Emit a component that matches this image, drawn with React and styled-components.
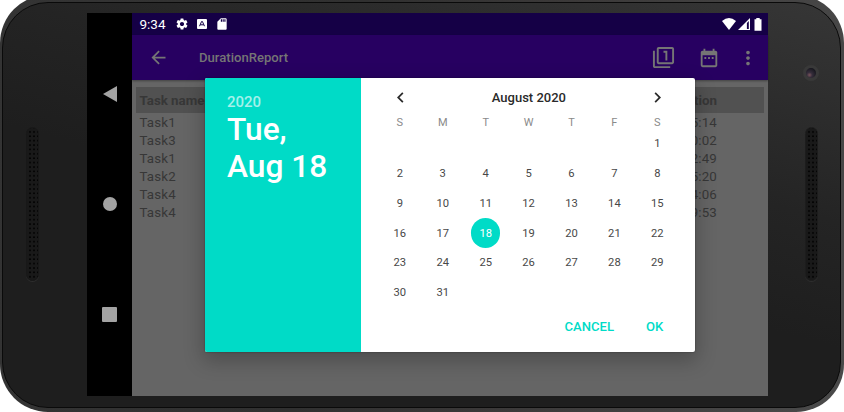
import React from "react";
import styled, { createGlobalStyle } from "styled-components";
import { MdArrowBack, MdFilter1, MdDateRange, MdMoreVert, MdSettings, MdSdCard, MdChevronLeft, MdChevronRight } from "react-icons/md";

const Global = createGlobalStyle`
  * { box-sizing: border-box; }
  body { margin: 0; background: #fff; overflow: hidden; font-family: Roboto, "Liberation Sans", sans-serif; }
`;

const Viewport = styled.div`
  width: 844px;
  height: 412px;
  overflow: hidden;
`;

const Phone = styled.div`
  width: 844px;
  height: 417px;
  margin-top: -5px;
  padding: 7px 3px 4px 2px;
  border-radius: 48px;
  background: linear-gradient(100deg, #343434 0%, #303030 40%, #3a3838 60%, #4a4a4a 100%);
  display: flex;
`;

const Body = styled.div`
  flex: 1;
  display: grid;
  grid-template-columns: 84px 681px 1fr;
  border: 1px solid #0a0a0a;
  border-radius: 46px;
  background: linear-gradient(15deg, #1e1e1e 0%, #1e1e1e 45%, #242424 65%, #363636 100%);
`;

const Bezel = styled.div`
  display: flex;
  flex-direction: column;
  align-items: center;
  padding: ${(p) => (p.$right ? "62px 0 0 14px" : "124px 26px 0 0")};
  gap: 46px;
`;

const Speaker = styled.div`
  width: 13px;
  height: 154px;
  border-radius: 7px;
  border: 1px solid ${(p) => (p.$light ? "#1d1d1d" : "#181818")};
  background: radial-gradient(circle at 2px 2px, #040404 0.7px, #191919 1.2px) 1px 2px / 4px 4.4px;
  box-shadow: 0 1px 0 #2e2e2e;
`;

const Camera = styled.div`
  width: 16px;
  height: 16px;
  flex: none;
  border-radius: 50%;
  border: 3px solid #393939;
  background: radial-gradient(circle at 35% 70%, #6b4c55 0 6%, #352d3b 28%, #17171e 75%);
`;

const Screen = styled.div`
  position: relative;
  height: 383px;
  margin-top: 10px;
  display: grid;
  grid-template-columns: 45px 1fr;
  background: #656565;
`;

const NavBar = styled.div`
  background: #000;
  display: grid;
  grid-template-rows: 161px 60px 160px;
  place-items: center;
  svg { display: block; }
`;

const AppArea = styled.div`
  display: flex;
  flex-direction: column;
  min-width: 0;
`;

const StatusBar = styled.div`
  height: 22px;
  background: #150046;
  color: #fff;
  display: flex;
  align-items: center;
  padding: 0 6.5px 0 7.5px;
  font-size: 13.5px;
  svg { display: block; }
`;

const Clock = styled.span`
  width: 35px;
  white-space: nowrap;
`;

const StatusIcons = styled.div`
  display: flex;
  align-items: center;
  gap: ${(p) => p.$gap}px;
  margin-left: ${(p) => p.$left};
`;

const ToolBar = styled.div`
  height: 45px;
  background: #270061;
  color: #757575;
  display: flex;
  align-items: center;
  padding: 0 9px 0 16px;
  box-shadow: 0 1px 2px rgba(0, 0, 0, 0.35);
  svg { display: block; }
`;

const OverflowIcon = styled(MdMoreVert)`
  margin-left: -6px;
`;

const Title = styled.h1`
  margin: 0 auto 0 30px;
  font-size: 13.1px;
  font-weight: 500;
`;

const Table = styled.div`
  padding: 7px 4px;
  color: #373737;
`;

const Row = styled.div`
  height: ${(p) => (p.$head ? 26 : 18)}px;
  background: ${(p) => (p.$head ? "#515151" : "transparent")};
  font-weight: ${(p) => (p.$head ? 700 : 400)};
  font-size: 13.3px;
  letter-spacing: ${(p) => (p.$head ? 0 : 0.15)}px;
  display: flex;
  align-items: center;
  justify-content: space-between;
  padding: ${(p) => (p.$head ? 0 : 1)}px 47px 0 3.5px;
`;

const Dialog = styled.div`
  position: absolute;
  left: 118px;
  top: 65px;
  width: 490.3px;
  height: 274.4px;
  display: grid;
  grid-template-columns: 156.4px 1fr;
  background: #fff;
  border-radius: 2px;
  overflow: hidden;
  box-shadow: 0 7px 20px 2px rgba(0, 0, 0, 0.24), 0 0 2px rgba(0, 0, 0, 0.4);
`;

const DatePanel = styled.div`
  background: #00dbc7;
  color: #fff;
  padding: 14px 22px;
  font-weight: 500;
`;

const Year = styled.div`
  font-size: 15px;
  line-height: 20px;
  color: #a5f1ea;
`;

const Headline = styled.div`
  font-size: 31.7px;
  line-height: 37.3px;
  margin-top: -1px;
`;

const Picker = styled.div`
  padding: 4px 16.5px 0 17px;
`;

const MonthBar = styled.div`
  height: 30px;
  display: flex;
  align-items: center;
  justify-content: space-between;
  padding: 0 11px 0 11.5px;
  color: #2a2a2a;
  font-size: 13px;
  font-weight: 500;
  svg { display: block; }
`;

const Grid = styled.div`
  display: grid;
  grid-template-columns: repeat(7, 1fr);
  grid-template-rows: 20px 27px repeat(5, 29.7px);
  place-items: center;
`;

const Weekday = styled.span`
  font-size: 11px;
  color: #8a8a8a;
`;

const Day = styled.span`
  grid-column-start: ${(p) => p.$start || "auto"};
  width: 29.5px;
  height: ${(p) => (p.$start ? 27 : 29.5)}px;
  padding-bottom: ${(p) => (p.$start ? 4 : 0)}px;
  border-radius: 50%;
  display: grid;
  place-items: center;
  font-size: 11.2px;
  color: ${(p) => (p.$selected ? "#fff" : "#484848")};
  background: ${(p) => (p.$selected ? "#00dbc7" : "transparent")};
`;

const Actions = styled.div`
  display: flex;
  justify-content: flex-end;
  gap: 32px;
  padding: 9.5px 15.5px 0 0;
`;

const Action = styled.button`
  border: 0;
  padding: 0;
  background: none;
  font: 500 13.1px/20px Roboto, sans-serif;
  color: #00dbc7;
`;

const rows = [["Task1", "5:14"], ["Task3", "0:02"], ["Task1", "2:49"], ["Task2", "5:20"], ["Task4", "4:06"], ["Task4", "9:53"]];
const days = Array.from({ length: 31 }, (_, i) => i + 1);

const LetterBadge = () => (
  <svg width="10" height="10" viewBox="0 0 10 10">
    <rect width="10" height="10" rx="1" fill="#fff" />
    <path d="M2.5 7.2 4.6 2.5h.8L7.5 7.2M3.4 5.8h3.2" fill="none" stroke="#150046" strokeWidth="1" />
  </svg>
);

const Wifi = () => (
  <svg width="14" height="12" viewBox="0 0 14 12">
    <path d="M0 3Q7-3 14 3L7 12Z" fill="#fff" />
  </svg>
);

const Signal = () => (
  <svg width="12" height="12" viewBox="0 0 12 12">
    <path d="M12 0V12H0Z" fill="#fff" />
    <path d="M10.8 3V11H8.9V5Z" fill="#150046" />
  </svg>
);

const Battery = () => (
  <svg width="8" height="13" viewBox="0 0 8 13">
    <path d="M2.3 0h3.4v1.3H7.5v11.4h-7V1.3h1.8Z" fill="#fff" />
  </svg>
);

export default function App() {
  return (
    <Viewport>
      <Global />
      <Phone>
        <Body>
          <Bezel><Speaker /></Bezel>
          <Screen>
            <NavBar>
              <svg width="14" height="16" viewBox="0 0 14 16"><path d="M14 0V16L0 8Z" fill="#a3a3a3" /></svg>
              <svg width="14" height="14"><circle cx="7" cy="7" r="7" fill="#a3a3a3" /></svg>
              <svg width="15" height="15"><rect width="15" height="15" rx="1" fill="#a3a3a3" /></svg>
            </NavBar>
            <AppArea>
              <StatusBar>
                <Clock>9:34</Clock>
                <StatusIcons $gap={8} $left="0">
                  <MdSettings size={14} /><LetterBadge /><MdSdCard size={14} />
                </StatusIcons>
                <StatusIcons $gap={2} $left="auto">
                  <Wifi /><Signal /><span /><Battery />
                </StatusIcons>
              </StatusBar>
              <ToolBar>
                <MdArrowBack size={21} />
                <Title>DurationReport</Title>
                <StatusIcons $gap={23} $left="0">
                  <MdFilter1 size={23} /><MdDateRange size={22} /><OverflowIcon size={22} />
                </StatusIcons>
              </ToolBar>
              <Table>
                <Row $head><span>Task name</span><span>Duration</span></Row>
                {rows.map(([name, time], i) => (
                  <Row key={i}><span>{name}</span><span>{time}</span></Row>
                ))}
              </Table>
            </AppArea>
            <Dialog>
              <DatePanel>
                <Year>2020</Year>
                <Headline>Tue,<br />Aug 18</Headline>
              </DatePanel>
              <Picker>
                <MonthBar>
                  <MdChevronLeft size={21} /><span>August 2020</span><MdChevronRight size={21} />
                </MonthBar>
                <Grid>
                  {["S", "M", "T", "W", "T", "F", "S"].map((d, i) => <Weekday key={i}>{d}</Weekday>)}
                  {days.map((d) => <Day key={d} $start={d === 1 ? 7 : 0} $selected={d === 18}>{d}</Day>)}
                </Grid>
                <Actions><Action>CANCEL</Action><Action>OK</Action></Actions>
              </Picker>
            </Dialog>
          </Screen>
          <Bezel $right><Camera /><Speaker $light /></Bezel>
        </Body>
      </Phone>
    </Viewport>
  );
}
